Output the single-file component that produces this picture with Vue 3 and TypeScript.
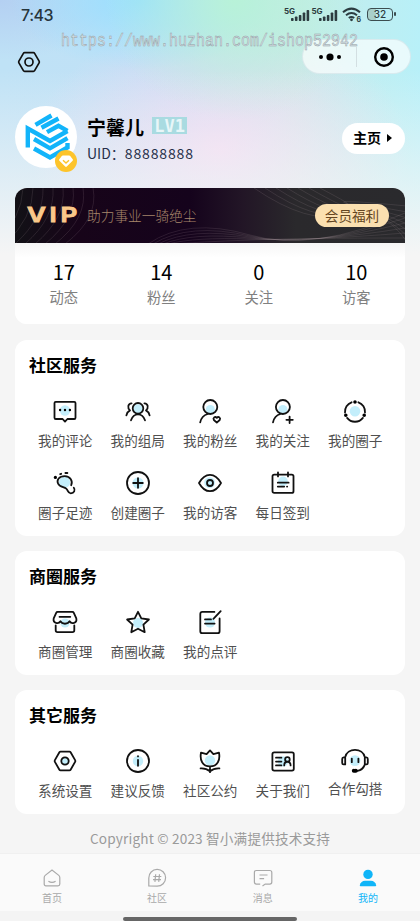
<script setup lang="ts">
interface Icon {
  dot?: [number, number, number]
  line: string
  fill?: string
}
interface Item {
  label: string
  icon: Icon
  raised?: boolean
}
interface Section {
  title: string
  items: Item[]
}

const ring = (x: number, y: number, r: number): string =>
  `M${x - r} ${y}a${r} ${r} 0 1 0 ${2 * r} 0a${r} ${r} 0 1 0 ${-2 * r} 0z`

const hexagon = 'M8.6 3.6h8.8q.8 0 1.2.7l4.5 7.8q.5.9 0 1.8l-4.5 7.8q-.4.7-1.2.7H8.6q-.8 0-1.2-.7L2.9 13.9q-.5-.9 0-1.8l4.5-7.8q.4-.7 1.2-.7z'

const stats = [
  { value: 17, label: '动态' },
  { value: 14, label: '粉丝' },
  { value: 0, label: '关注' },
  { value: 10, label: '访客' },
]

const sections: Section[] = [
  {
    title: '社区服务',
    items: [
      {
        label: '我的评论',
        icon: {
          dot: [13, 12.5, 5.2],
          line: 'M3.8 3.8h18.4q1.3 0 1.3 1.3v14.6q0 1.3-1.3 1.3h-6.8L13 23.6 10.6 21H3.8q-1.3 0-1.3-1.3V5.1q0-1.3 1.3-1.3z',
          fill: ring(8.1, 12, 1.2) + ring(13, 12, 1.2) + ring(17.9, 12, 1.2),
        },
      },
      {
        label: '我的组局',
        icon: {
          dot: [13, 10.8, 4.6],
          line: ring(13, 10.3, 5.3) + 'M6 22.3Q8 16.3 13 16.3T20 22.3M6.6 5.3C2.8 5.5 2.2 10 5 12.4 3 13.5 1.8 15 1.4 17.3M19.4 5.3C23.2 5.5 23.8 10 21 12.4 23 13.5 24.2 15 24.6 17.3',
        },
      },
      {
        label: '我的粉丝',
        icon: {
          dot: [13.3, 11.5, 4.5],
          line: ring(13.3, 9, 7) + 'M3.2 24.4Q4.5 17.8 10.8 16M19.8 24.6L16.9 22C15.6 20 18 17.8 19.8 19.8 21.6 17.8 24 20 22.7 22z',
        },
      },
      {
        label: '我的关注',
        icon: {
          dot: [12.9, 11.5, 4.5],
          line: ring(12.9, 9, 7) + 'M3 24.4Q4.3 17.8 10.4 16M16.4 21.8h6.4M19.6 18.6V25',
        },
      },
      {
        label: '我的圈子',
        icon: {
          dot: [13, 13.3, 5.3],
          line: 'M16.4 4.3A10 10 0 0 1 23 14.6M20.9 19.9A10 10 0 0 1 5.1 19.9M3 14.6A10 10 0 0 1 9.6 4.3',
          fill: ring(13, 4, 1.8) + ring(3.8, 17.3, 1.8) + ring(22.2, 17.3, 1.8),
        },
      },
      {
        label: '圈子足迹',
        icon: {
          dot: [12.5, 12.4, 5.6],
          line: 'M19.2 15.2C21 11.5 18.5 6.2 12.8 6.2 7 6.2 4.5 10 6 13.5 7.5 17.3 12 16.8 14.2 18.6 16.3 20.4 15.6 23.4 18.8 23.3 22.2 23.2 23.6 20 21.8 17.8M8.2 4.2l1-.4M13.4 3h2',
          fill: ring(3.4, 7.4, 1.6),
        },
      },
      {
        label: '创建圈子',
        icon: { dot: [13, 13, 5.5], line: ring(13, 13, 11) + 'M8.2 13h9.6M13 8.2v9.6' },
      },
      {
        label: '我的访客',
        icon: {
          dot: [12.6, 12.6, 5.4],
          line: 'M2 13Q6.5 4.8 13 4.8T24 13Q19.5 21.2 13 21.2T2 13z' + ring(13, 13, 3),
        },
      },
      {
        label: '每日签到',
        icon: {
          dot: [13, 11.4, 4.8],
          line: 'M4.2 4.6h17.6q1.7 0 1.7 1.7v14.9q0 1.7-1.7 1.7H4.2q-1.7 0-1.7-1.7V6.3q0-1.7 1.7-1.7zM8 2.4v4M18 2.4v4M7.8 12.7h10.8M7.8 16.6h6.4M17 16.6h.2',
        },
      },
    ],
  },
  {
    title: '商圈服务',
    items: [
      {
        label: '商圈管理',
        icon: {
          dot: [13, 14, 4.6],
          line: 'M5.6 2.9h14.8q1 0 1.4.9l2.5 5.6C25.4 14.3 19.4 15.4 17.6 12.2 16 15.6 10 15.6 8.4 12.2 6.6 15.4.6 14.3 1.7 9.4L4.2 3.8q.4-.9 1.4-.9zM7.5 7.8h10.8M3.7 16.3v5q0 1.8 1.8 1.8h15q1.8 0 1.8-1.8v-5',
        },
      },
      {
        label: '商圈收藏',
        icon: {
          dot: [13, 14, 5],
          line: 'M13 2.8L16.3 9.4 23.9 10.5 18.4 15.7 19.7 23.2 13 19.7 6.3 23.2 7.6 15.7 2.1 10.5 9.7 9.4z',
        },
      },
      {
        label: '我的点评',
        icon: {
          dot: [13, 13.6, 5],
          line: 'M17.4 2.9H5.3q-2 0-2 2v17.3q0 2 2 2h15.3q2 0 2-2V9.4M23.7 2.2L16.4 9.9M8 10.4h6M8 14.6h9.6',
        },
      },
    ],
  },
  {
    title: '其它服务',
    items: [
      { label: '系统设置', icon: { dot: [13, 13, 3.6], line: hexagon + ring(13, 13, 3.7) } },
      {
        label: '建议反馈',
        icon: { dot: [13, 13, 5.2], line: ring(13, 13, 11) + 'M13 11.8v6M13 8.2v.2' },
      },
      {
        label: '社区公约',
        icon: {
          dot: [13, 12.4, 5.2],
          line: 'M13 2.4L9.6 6.1 4 4.6C2.6 12 5.4 18.4 13 18.4S23.4 12 22 4.6L16.4 6.1zM13 18.4v5.8M3.6 20.4Q9 20 13 23.4 17 20 22.4 20.4',
        },
      },
      {
        label: '关于我们',
        icon: {
          dot: [13, 13.4, 5.2],
          line: 'M4.2 4.4h17.8q1.8 0 1.8 1.8v14.6q0 1.8-1.8 1.8H4.2q-1.8 0-1.8-1.8V6.2q0-1.8 1.8-1.8zM6 9.7h5.4M6 13.6h5.4M6 17.4h5.4M14.2 17.4Q14.2 13.8 17.4 13.8T20.6 17.4' + ring(17.4, 11.4, 2.3),
        },
      },
      {
        label: '合作勾搭',
        raised: true,
        icon: {
          dot: [13, 12.6, 5.4],
          line: 'M3.2 9.2C5 -.5 21 -.5 22.8 9.2M3.2 9.4v7H1.6Q.2 16.4.2 15V11Q.2 9.4 1.6 9.4zM22.8 9.4v7h1.6q1.4 0 1.4-1.4V11q0-1.6-1.4-1.6zM22.8 16.6Q20.8 22 15.6 22.8M9.8 10.6v3.6M16.4 10.6v3.6M11.4 22.8h2.6',
          fill: ring(11.8, 22.8, 2) + ring(13.8, 22.8, 2),
        },
      },
    ],
  },
]

const tabs = [
  { label: '首页', line: 'M3.2 7.4L10 2l6.8 5.4q1 .8 1 2.1V16q0 1.8-1.8 1.8H4Q2.2 17.8 2.2 16V9.5q0-1.3 1-2.1zM6.4 13.2q3.6 2.4 7.2 0' },
  { label: '社区', line: 'M1.8 18V10a8.4 8.4 0 1 1 8.4 8.2zM8.7 6.3l-.8 7.6M12.5 6.3l-.8 7.6M6.3 8.5h8M6 11.7h8' },
  { label: '消息', line: 'M7.2 16.1H3.4q-2 0-2-2V4.5q0-2 2-2h13.4q2 0 2 2v9.6q0 2-2 2h-4.6l-2.7 1.9M6.5 7h8M6.5 10.7h4.6' },
  { label: '我的', line: '', active: true },
]

const bars = [3, 4.5, 6, 8.5, 11]
</script>

<template>
  <div class="page">
    <header class="status">
      <span class="time">7:43</span>
      <div class="signals">
        <div v-for="n in 2" :key="n" class="signal">
          <span>5G</span>
          <svg width="19" height="12" viewBox="0 0 19 12">
            <rect v-for="(h, i) in bars" :key="i" :x="i * 3.9" :y="12 - h" width="2.6" :height="h" rx=".8" />
          </svg>
        </div>
        <svg class="wifi" width="20" height="15" viewBox="0 0 20 15">
          <path d="M1 5.2Q9.5-2 18 5.2M4 8.2q5.5-4.4 11 0M6.8 11q2.7-2 5.4 0" />
          <circle cx="9.5" cy="12.8" r="1.4" />
          <text x="14.5" y="15">6</text>
        </svg>
        <div class="battery"><span>32</span></div>
      </div>
    </header>
    <div class="watermark">https://www.huzhan.com/ishop52942</div>

    <nav class="top-nav">
      <svg class="gear" width="26" height="26" viewBox="0 0 26 26"><path :d="hexagon + ring(13, 13, 4)" /></svg>
      <div class="capsule">
        <svg width="24" height="10" viewBox="0 0 24 10">
          <circle cx="3" cy="5" r="2" /><circle cx="12" cy="5" r="3.6" /><circle cx="21" cy="5" r="2" />
        </svg>
        <i></i>
        <svg width="22" height="22" viewBox="0 0 22 22">
          <circle class="target" cx="11" cy="11" r="8.8" /><circle cx="11" cy="11" r="3.8" />
        </svg>
      </div>
    </nav>

    <section class="profile">
      <div class="avatar">
        <svg width="62" height="62" viewBox="0 0 62 62">
          <path class="logo" d="M12.8 41.5V22.5L35 35 52.5 25M19 33L35 42.3 52.5 32.2M19 42.5L35 51.5 52.5 41.5V37M20.5 18.8L36.5 9.5M26.5 21.8L43.5 12.5M32 26.2L43.5 19.8 52.5 24.8" />
        </svg>
        <div class="badge">
          <svg width="22" height="22" viewBox="0 0 22 22">
            <path class="gem" d="M7.8 5.5h6.4q.6 0 1 .5l2.5 3.3q.6.8-.1 1.5l-5.8 5.8q-.8.7-1.6 0l-5.8-5.8q-.7-.7-.1-1.5L6.8 6q.4-.5 1-.5z" />
            <path class="smile" d="M8 10.3l3 2.7 3-2.7" />
          </svg>
        </div>
      </div>
      <div class="who">
        <div class="name-row">
          <h1>宁馨儿</h1>
          <span class="level">LV1</span>
        </div>
        <p>UID：<span>88888888</span></p>
      </div>
      <button class="home">主页<i></i></button>
    </section>

    <section class="card summary">
      <div class="vip">
        <svg class="waves" width="390" height="55" viewBox="0 0 390 55">
          <path v-for="n in 8" :key="'a' + n" :d="`M${n * 10 - 2} 0Q${n * 11 - 4} 30 ${n * 10 - 30} 56`" />
          <path v-for="n in 6" :key="'b' + n" :d="`M${128 + n * 5} 56Q${170 + n * 2} ${24 + n * 5} 235 ${46 + n}T390 ${20 + n * 5}`" />
          <path v-for="n in 7" :key="'c' + n" :d="`M${228 + n * 11} 0Q${285 + n * 8} ${40 - n * 3} 330 ${29 - n * 2}T392 ${60 - n * 6}`" />
        </svg>
        <strong>VIP</strong>
        <span class="slogan">助力事业一骑绝尘</span>
        <span class="benefit">会员福利</span>
      </div>
      <div class="stats">
        <div v-for="s in stats" :key="s.label" class="stat">
          <b>{{ s.value }}</b>
          <span>{{ s.label }}</span>
        </div>
      </div>
    </section>

    <section v-for="s in sections" :key="s.title" class="card services">
      <h2>{{ s.title }}</h2>
      <div class="grid">
        <div v-for="item in s.items" :key="item.label" class="item" :class="{ raised: item.raised }">
          <svg width="26" height="26" viewBox="0 0 26 26">
            <circle v-if="item.icon.dot" class="tint" :cx="item.icon.dot[0]" :cy="item.icon.dot[1]" :r="item.icon.dot[2]" />
            <path class="line" :d="item.icon.line" />
            <path v-if="item.icon.fill" :d="item.icon.fill" />
          </svg>
          <span>{{ item.label }}</span>
        </div>
      </div>
    </section>

    <p class="copyright">Copyright © 2023 智小满提供技术支持</p>

    <footer>
      <div class="tabs">
        <div v-for="t in tabs" :key="t.label" class="tab" :class="{ active: t.active }">
          <svg width="20" height="20" viewBox="0 0 20 20">
            <template v-if="t.active">
              <circle cx="10" cy="6.4" r="4.7" />
              <path class="body" d="M1.8 17.3Q3 12.8 7 12.8h6q4 0 5.2 4.5.2 1-.8 1H2.6q-1 0-.8-1z" />
            </template>
            <path v-else :d="t.line" />
          </svg>
          <span>{{ t.label }}</span>
        </div>
      </div>
      <div class="indicator"></div>
    </footer>
  </div>
</template>

<style>
body {
  margin: 0;
  background: #f5f5f5;
}
</style>

<style scoped>
* {
  box-sizing: border-box;
}
.page {
  position: relative;
  width: 420px;
  height: 921px;
  overflow: hidden;
  display: flex;
  flex-direction: column;
  font-family: "Noto Sans CJK SC", "Noto Sans", sans-serif;
  color: #000;
  background:
    linear-gradient(180deg, rgba(245, 245, 245, 0) 70px, rgba(245, 245, 245, 0.5) 160px, #f5f5f5 255px),
    radial-gradient(ellipse 130px 120px at 235px 0, #b8f2d8 0%, rgba(184, 242, 216, 0) 100%),
    radial-gradient(ellipse 130px 70px at 140px 0, #98dfff 0%, rgba(152, 223, 255, 0) 100%),
    radial-gradient(ellipse 190px 130px at 220px 150px, #f0d8f2 0%, rgba(240, 216, 242, 0) 100%),
    radial-gradient(ellipse 120px 60px at 0 0, #b4d0f2 0%, rgba(180, 208, 242, 0) 100%),
    linear-gradient(90deg, #bfe2f6 0%, #c0e0f6 45%, #c6ebe8 70%, #b8f0f8 100%);
}
h1,
h2,
p {
  margin: 0;
}
.status {
  height: 30px;
  padding: 0 24px 0 21px;
  display: flex;
  justify-content: space-between;
}
.time {
  font: 500 16px/30px Inter, sans-serif;
  letter-spacing: -0.45px;
  color: #26343c;
}
.signals {
  display: flex;
  padding-top: 7px;
  align-items: flex-start;
  color: #2c3c40;
  fill: #2c3c40;
}
.signal {
  display: flex;
  width: 27.5px;
  height: 14px;
  align-items: flex-end;
}
.signal span {
  align-self: flex-start;
  width: 7px;
  font: 700 8px/8px Inter, sans-serif;
  white-space: nowrap;
}
.signal svg {
  flex: none;
}
.wifi {
  margin: 0 5px 0 3px;
  overflow: visible;
}
.wifi path {
  fill: none;
  stroke: #2c3c40;
  stroke-width: 2;
}
.wifi text {
  font: 700 7px Inter, sans-serif;
}
.battery {
  position: relative;
  width: 26px;
  height: 13px;
  margin: 1px 3px 0 0;
  border: 1.5px solid #3c4d50;
  border-radius: 4px;
  background: linear-gradient(90deg, #a9cfc9 34%, transparent 34%);
  text-align: center;
  font: 500 10px/11px Inter, sans-serif;
}
.battery::after {
  content: "";
  position: absolute;
  right: -4px;
  top: 3px;
  width: 2px;
  height: 4px;
  border-radius: 1px;
  background: #3c4d50;
}
.watermark {
  position: absolute;
  z-index: 2;
  left: 61px;
  top: 33px;
  font: 15px/18px "Liberation Mono", monospace;
  color: #d5e0e5;
  -webkit-text-stroke: 0.4px #929da3;
  transform: scaleY(1.2);
  white-space: nowrap;
}
.top-nav {
  height: 76px;
  padding: 9px 9px 0 16px;
  display: flex;
  justify-content: space-between;
  align-items: flex-start;
}
.gear {
  margin-top: 10px;
  fill: none;
  stroke: #111;
  stroke-width: 1.7;
}
.capsule {
  width: 109px;
  height: 35px;
  padding: 0 15px;
  border-radius: 18px;
  border: 1px solid rgba(200, 220, 225, 0.5);
  background: rgba(255, 255, 255, 0.68);
  display: flex;
  align-items: center;
  justify-content: space-between;
}
.capsule i {
  width: 1px;
  height: 20px;
  margin-left: -3px;
  background: #d3dfe2;
}
.target {
  fill: none;
  stroke: #000;
  stroke-width: 2.4;
}
.profile {
  height: 82px;
  padding: 0 15px;
  display: flex;
  align-items: flex-start;
}
.avatar {
  position: relative;
  width: 62px;
  height: 62px;
  border-radius: 50%;
  background: #fff;
}
.logo {
  fill: none;
  stroke: #12b4fa;
  stroke-width: 4.4;
}
.badge {
  position: absolute;
  left: 40px;
  top: 44px;
  width: 22px;
  height: 22px;
  border-radius: 50%;
  background: #fdc42b;
}
.badge svg {
  display: block;
}
.gem {
  fill: #fff;
}
.smile {
  fill: none;
  stroke: #fdc42b;
  stroke-width: 1.4;
}
.who {
  margin-left: 10px;
  padding-top: 8px;
  flex: 1;
}
.name-row {
  display: flex;
  align-items: center;
  height: 26px;
}
h1 {
  font-size: 19px;
  line-height: 26px;
  font-weight: 600;
}
.level {
  margin: -3px 0 0 8px;
  width: 35px;
  height: 17px;
  background: #a9dbe1;
  color: #e8f6f8;
  font: 700 17px/18px "DejaVu Sans Mono", monospace;
  text-align: center;
}
.who p {
  margin-top: 3px;
  font-size: 14px;
  line-height: 20px;
  color: #26304a;
  white-space: nowrap;
}
.who p span {
  letter-spacing: 0.85px;
}
.home {
  width: 63px;
  height: 31px;
  margin-top: 17px;
  padding: 0 0 2px 11px;
  display: flex;
  align-items: center;
  border: 0;
  border-radius: 16px;
  background: #fff;
  color: #000;
  font: 600 14px/29px "Noto Sans CJK SC", sans-serif;
}
.home i {
  margin-left: 6px;
  border: 4px solid transparent;
  border-left: 5px solid #000;
  border-right: 0;
}
.card {
  flex: none;
  margin: 0 15px;
  border-radius: 12px;
  background: #fff;
}
.summary {
  height: 136px;
  overflow: hidden;
  margin-bottom: 15.5px;
}
.vip {
  position: relative;
  height: 55px;
  padding: 0 16px 0 12px;
  display: flex;
  align-items: center;
  background: linear-gradient(90deg, #121116 0%, #170419 16%, #15031c 45%, #221526 58%, #2a292c 72%, #2a2a2d 100%);
}
.waves {
  position: absolute;
  left: 0;
  top: 0;
  fill: none;
  stroke: rgba(205, 180, 190, 0.17);
  stroke-width: 0.8;
}
.vip strong {
  position: relative;
  width: 50px;
  font: 600 20px/55px Inter, sans-serif;
  letter-spacing: 2.8px;
  color: #f9c88a;
  -webkit-text-stroke: 0.9px #f9c88a;
  transform: scaleX(1.3);
  transform-origin: 0 50%;
}
.slogan {
  position: relative;
  flex: 1;
  margin: -2px 0 0 10px;
  font-size: 13.7px;
  font-weight: 300;
  color: #a8876b;
}
.benefit {
  position: relative;
  width: 74px;
  height: 23px;
  border-radius: 12px;
  background: #fbe0b0;
  color: #644521;
  text-align: center;
  font-size: 13.6px;
  line-height: 22px;
}
.stats {
  height: 81px;
  padding-top: 16px;
  display: grid;
  grid-template-columns: repeat(4, 1fr);
  background: linear-gradient(180deg, #f6f6f6, #fff 15px);
}
.stat {
  display: flex;
  flex-direction: column;
  align-items: center;
}
.stat b {
  font: 400 20px/26px "Noto Sans CJK SC", sans-serif;
}
.stat span {
  margin-top: 1px;
  font-size: 14.3px;
  line-height: 22px;
  color: #808080;
}
.services {
  padding: 13px 14px 13.5px;
  margin-bottom: 15.5px;
}
h2 {
  font-size: 17px;
  line-height: 24px;
  font-weight: 600;
}
.grid {
  margin-top: 21px;
  display: grid;
  grid-template-columns: repeat(5, 72.5px);
  row-gap: 20.5px;
}
.item {
  display: flex;
  flex-direction: column;
  align-items: center;
  gap: 6px;
}
.item svg {
  overflow: visible;
}
.item span {
  font-size: 13.6px;
  line-height: 20px;
  color: #505050;
}
.raised {
  gap: 4px;
}
.tint {
  fill: #c3eefb;
}
.line {
  fill: none;
  stroke: #111;
  stroke-width: 1.8;
  stroke-linecap: round;
  stroke-linejoin: round;
}
.copyright {
  text-align: center;
  font-size: 13.6px;
  line-height: 20px;
  letter-spacing: 0.18px;
  margin-top: -1px;
  color: #9a9a9a;
}
footer {
  margin-top: auto;
  height: 68px;
  flex: none;
  display: flex;
  flex-direction: column;
  align-items: center;
  background: #f4f4f4;
  border-top: 1px solid #f0f0f0;
}
.tabs {
  width: 420px;
  height: 57px;
  padding-top: 14px;
  display: grid;
  grid-template-columns: 104px 106px 105.4px 105.4px;
  background: #fafafa;
}
.tab {
  display: flex;
  flex-direction: column;
  align-items: center;
  color: #a9a9a9;
  font-size: 10px;
  line-height: 14px;
  gap: 3px;
}
.tab path {
  fill: none;
  stroke: #a9a9a9;
  stroke-width: 1.2;
}
.tab.active {
  color: #10b5f8;
  fill: #10b5f8;
}
.tab .body {
  fill: #10b5f8;
  stroke: none;
}
.indicator {
  width: 174px;
  height: 4px;
  margin-top: 6px;
  border-radius: 2px;
  background: #666;
}
</style>
